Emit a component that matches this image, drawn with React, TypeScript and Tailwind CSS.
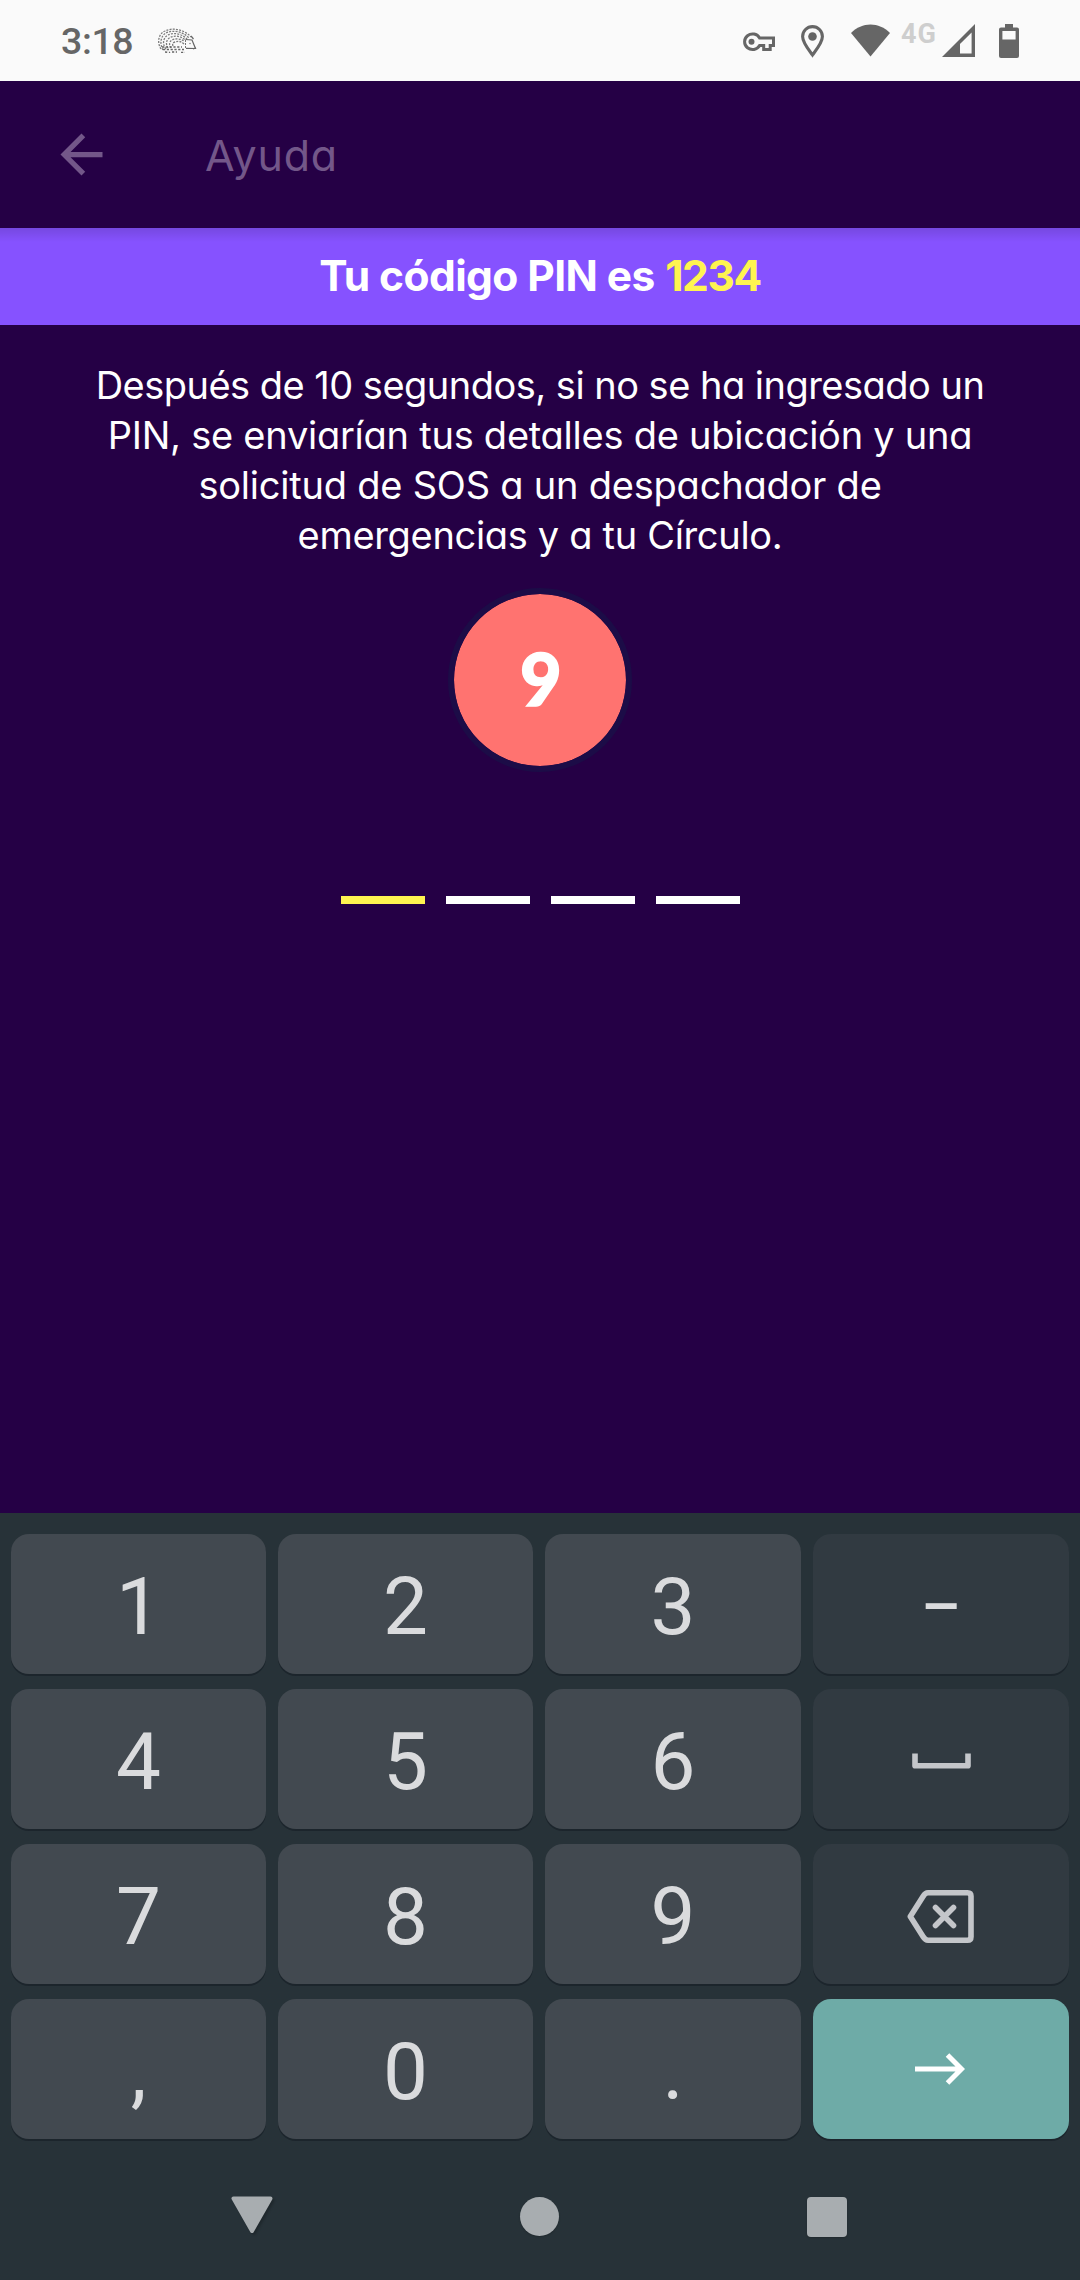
import React from "react";

const INTER = "font-['Inter',sans-serif] [font-feature-settings:'cv11']";

function Hedgehog() {
  return (
    <svg className="ml-[23px] h-[26px] w-[40px]" viewBox="0 0 40 26" fill="none" stroke="#666">
      <g strokeWidth="1.3" strokeDasharray="2 1.2" opacity="0.85">
        <path d="M4 21 C0 15 1 6 8 3 C16 -1 28 2 34 9" />
        <path d="M6 22 C2.5 16 3.5 8 9 5 C16 1.5 26 3.5 32 10" />
        <path d="M9 21 C5 16 6 10 11 7 C17 4 25 6 30 11" />
        <path d="M11 20 C8.500 16 9 12 13 9.500 C18 7 24 8 28 12" />
        <path d="M14 20 C11.500 16 12.500 13.500 15 12 C19 10 24 11 27 13" />
        <path d="M16 18 C15 16 16 14.500 18 14 C21 13 24 13 27 16" />
      </g>
      <g strokeWidth="1.3" strokeDasharray="2.2 1.600">
        <path d="M5 19 H25" />
        <path d="M6 21.500 H27" />
        <path d="M8 24 C10 24 12 25 13 24 M15 24 H20 M24 24.300 H28" />
      </g>
      <path d="M28.500 11.500 L35 12 L38.500 20.500 L29 20.300" strokeWidth="1.2" />
      <path d="M28.500 12 V20" strokeWidth="0.900" strokeDasharray="2 1" />
      <path d="M34 8 L36.500 11 M36 20.800 L39 20" strokeWidth="1.2" />
      <circle cx="33" cy="15.500" r="0.700" fill="#6f6f6f" stroke="none" />
    </svg>
  );
}

function StatusBar() {
  return (
    <header className="flex h-[81px] shrink-0 items-center bg-[#fafafa] pl-[61px] pr-[61px] text-[#666]">
      <span className="w-[73px] whitespace-nowrap pt-[3px] font-['Roboto',sans-serif] text-[37.500px] font-medium leading-none tracking-[-0.400px]">3:18</span>
      <Hedgehog />
      <div className="ml-auto flex h-[34px] items-start">
        <svg className="mt-[8px] h-[20px] w-[33px]" viewBox="0 0 33 20" fill="none" stroke="#666" strokeWidth="3">
          <path d="M17.600 6 H31.500 V13.500 H28.200 V17.500 H21.700 V13.500 H17.600 A8 7.800 0 1 1 17.600 6 Z" />
          <circle cx="9.500" cy="9.800" r="3" fill="#666" stroke="none" />
        </svg>
        <svg className="ml-[26px] mt-px h-[33px] w-[23px]" viewBox="0 0 23 33" fill="none">
          <path d="M11.500 30 C9.500 27 1.600 18 1.600 11.500 A9.900 9.900 0 0 1 21.400 11.500 C21.400 18 13.500 27 11.500 30 Z" stroke="#666" strokeWidth="3.100" />
          <circle cx="11.500" cy="11.500" r="4.300" fill="#666" />
        </svg>
        <svg className="ml-[27px] h-[33px] w-[39px]" viewBox="0 0 39 33" fill="#666">
          <path d="M0 9 C11 -2.400 28 -2.400 39 9 L19.500 32.500 Z" />
        </svg>
        <span className="ml-[11px] mt-px w-[40px] font-['Roboto',sans-serif] text-[27px] font-bold leading-[19px] tracking-[1px] text-[#cecece]">4G</span>
        <svg className="ml-[1px] h-[33px] w-[33px]" viewBox="0 0 33 33" fill="#666">
          <path fillRule="evenodd" d="M33 0 V33 H0 Z M29.600 8.500 L18 20 V29.500 H29.600 Z" />
        </svg>
        <svg className="ml-[24px] h-[34px] w-[20px]" viewBox="0 0 20 34" fill="#666">
          <path fillRule="evenodd" d="M6 0 H14 V3.500 H18 Q20 3.500 20 5.500 V32 Q20 34 18 34 H2 Q0 34 0 32 V5.500 Q0 3.500 2 3.500 H6 Z M3.400 7 V15.500 H16.600 V7 Z" />
        </svg>
      </div>
    </header>
  );
}

function AppBar() {
  return (
    <nav className="flex h-[147px] shrink-0 items-center pl-[50px]">
      <svg className="h-[63px] w-[63px]" viewBox="0 0 24 24" fill="#735789">
        <path d="M20 11H7.830l5.590-5.590L12 4l-8 8 8 8 1.410-1.410L7.830 13H20v-2z" />
      </svg>
      <h1 className={`ml-[92px] text-[43px] font-normal leading-[50px] tracking-[0.8px] text-[#735789] ${INTER}`}>Ayuda</h1>
    </nav>
  );
}

function PinBanner() {
  return (
    <div className="flex h-[97px] shrink-0 items-center justify-center bg-[#8652ff] bg-[linear-gradient(to_bottom,rgba(0,0,0,0.12),rgba(0,0,0,0)_14px)] pb-[2px]">
      <p className={`whitespace-pre text-[42.500px] font-bold leading-[50px] tracking-[-0.600px] text-white ${INTER}`}>
        Tu código PIN es <span className="ml-[1px] tracking-[-1.400px] text-[#fff450]">1234</span>
      </p>
    </div>
  );
}

function Message() {
  return (
    <p className={`flex flex-col items-center whitespace-nowrap text-[38px] leading-[50px] text-white ${INTER}`}>
      <span className="tracking-[-0.520px]">Después de 10 segundos, si no se ha ingresado un</span>
      <span className="tracking-[-0.250px]">PIN, se enviarían tus detalles de ubicación y una</span>
      <span className="tracking-[-0.220px]">solicitud de SOS a un despachador de</span>
      <span className="tracking-[-0.320px]">emergencias y a tu Círculo.</span>
    </p>
  );
}

const KEY_BASE =
  "flex h-[140px] items-center justify-center rounded-[18px] font-['Roboto',sans-serif] text-[80px] leading-none shadow-[0_2px_0_#1c252c]";

function NumberKey({ label }: { label: string }) {
  return <button className={`${KEY_BASE} bg-[#424950] pt-[5px] text-[#dadbdd]`}>{label}</button>;
}

function ActionKey({ children }: { children: React.ReactNode }) {
  return <button className={`${KEY_BASE} bg-[#313a41] text-[#dadbdd]`}>{children}</button>;
}

function Keyboard() {
  return (
    <section className="grid h-[647px] shrink-0 grid-cols-[255px_255px_256px_256px] content-start gap-x-[12px] gap-y-[15px] bg-[#273238] px-[11px] pt-[21px]">
      <NumberKey label="1" />
      <NumberKey label="2" />
      <NumberKey label="3" />
      <ActionKey>
        <span className="pt-[6px] text-[62px] font-medium">–</span>
      </ActionKey>
      <NumberKey label="4" />
      <NumberKey label="5" />
      <NumberKey label="6" />
      <ActionKey>
        <svg className="mt-[4px] h-[16px] w-[59px]" viewBox="0 0 59 16" fill="none" stroke="#c4c6ca" strokeWidth="5.600" strokeLinejoin="round">
          <path d="M3 0.500 V12.800 H56 V0.500" />
        </svg>
      </ActionKey>
      <NumberKey label="7" />
      <NumberKey label="8" />
      <NumberKey label="9" />
      <ActionKey>
        <svg className="mr-[2px] mt-[5px] h-[53px] w-[67px]" viewBox="0 0 67 53" fill="none" stroke="#c4c6ca" strokeWidth="5.600" strokeLinejoin="round">
          <path d="M3.300 26.500 L16 6.500 Q18.300 2.800 21 2.800 H60.500 Q64 2.800 64 6.300 V46.700 Q64 50.200 60.500 50.200 H21 Q18.300 50.200 16 46.500 Z" />
          <path d="M28.500 17.500 L46.500 35.500 M46.500 17.500 L28.500 35.500" strokeLinecap="round" />
        </svg>
      </ActionKey>
      <NumberKey label="," />
      <NumberKey label="0" />
      <NumberKey label="." />
      <button className={`${KEY_BASE} bg-[#6eaba7]`}>
        <svg className="mr-[2px] h-[32px] w-[50px]" viewBox="0 0 50 32" fill="none" stroke="#fff" strokeWidth="5">
          <path d="M0 16 H46 M32.500 2 L46.500 16 L32.500 30" />
        </svg>
      </button>
    </section>
  );
}

function NavigationBar() {
  return (
    <footer className="flex h-[120px] shrink-0 items-center bg-[#273238] pl-[230px]">
      <svg className="mb-[10px] h-[40px] w-[44px] drop-shadow-[2px_2px_1px_rgba(0,0,0,0.2)]" viewBox="0 0 44 40" fill="#a8adb0" stroke="#a8adb0" strokeWidth="4" strokeLinejoin="round">
        <path d="M3.500 3.500 H40.500 L22 36 Z" />
      </svg>
      <div className="mb-[7px] ml-[246px] size-[39px] rounded-full bg-[#a8adb0] shadow-[0_1px_2px_rgba(0,0,0,0.2)]" />
      <div className="mb-[6px] ml-[248px] size-[40px] rounded-[4px] bg-[#a8adb0] shadow-[0_1px_2px_rgba(0,0,0,0.2)]" />
    </footer>
  );
}

export default function App() {
  return (
    <div className="flex h-[2280px] w-[1080px] flex-col overflow-hidden bg-[#250045]">
      <StatusBar />
      <AppBar />
      <PinBanner />
      <main className="flex flex-1 flex-col items-center pt-[35px]">
        <Message />
        <div className="mt-[28px] flex size-[184px] items-center justify-center rounded-full border-[6px] border-[#1c0c47] bg-[#ff7370] bg-clip-padding">
          <span className="pb-[5px] pl-[2px] font-['Lato',sans-serif] text-[72px] font-black leading-none text-white [-webkit-text-stroke:1.5px_white]">9</span>
        </div>
        <div className="mt-[124px] flex gap-[21px]">
          <div className="h-[8px] w-[84px] bg-[#fff450]" />
          <div className="h-[8px] w-[84px] bg-white" />
          <div className="h-[8px] w-[84px] bg-white" />
          <div className="h-[8px] w-[84px] bg-white" />
        </div>
      </main>
      <Keyboard />
      <NavigationBar />
    </div>
  );
}
